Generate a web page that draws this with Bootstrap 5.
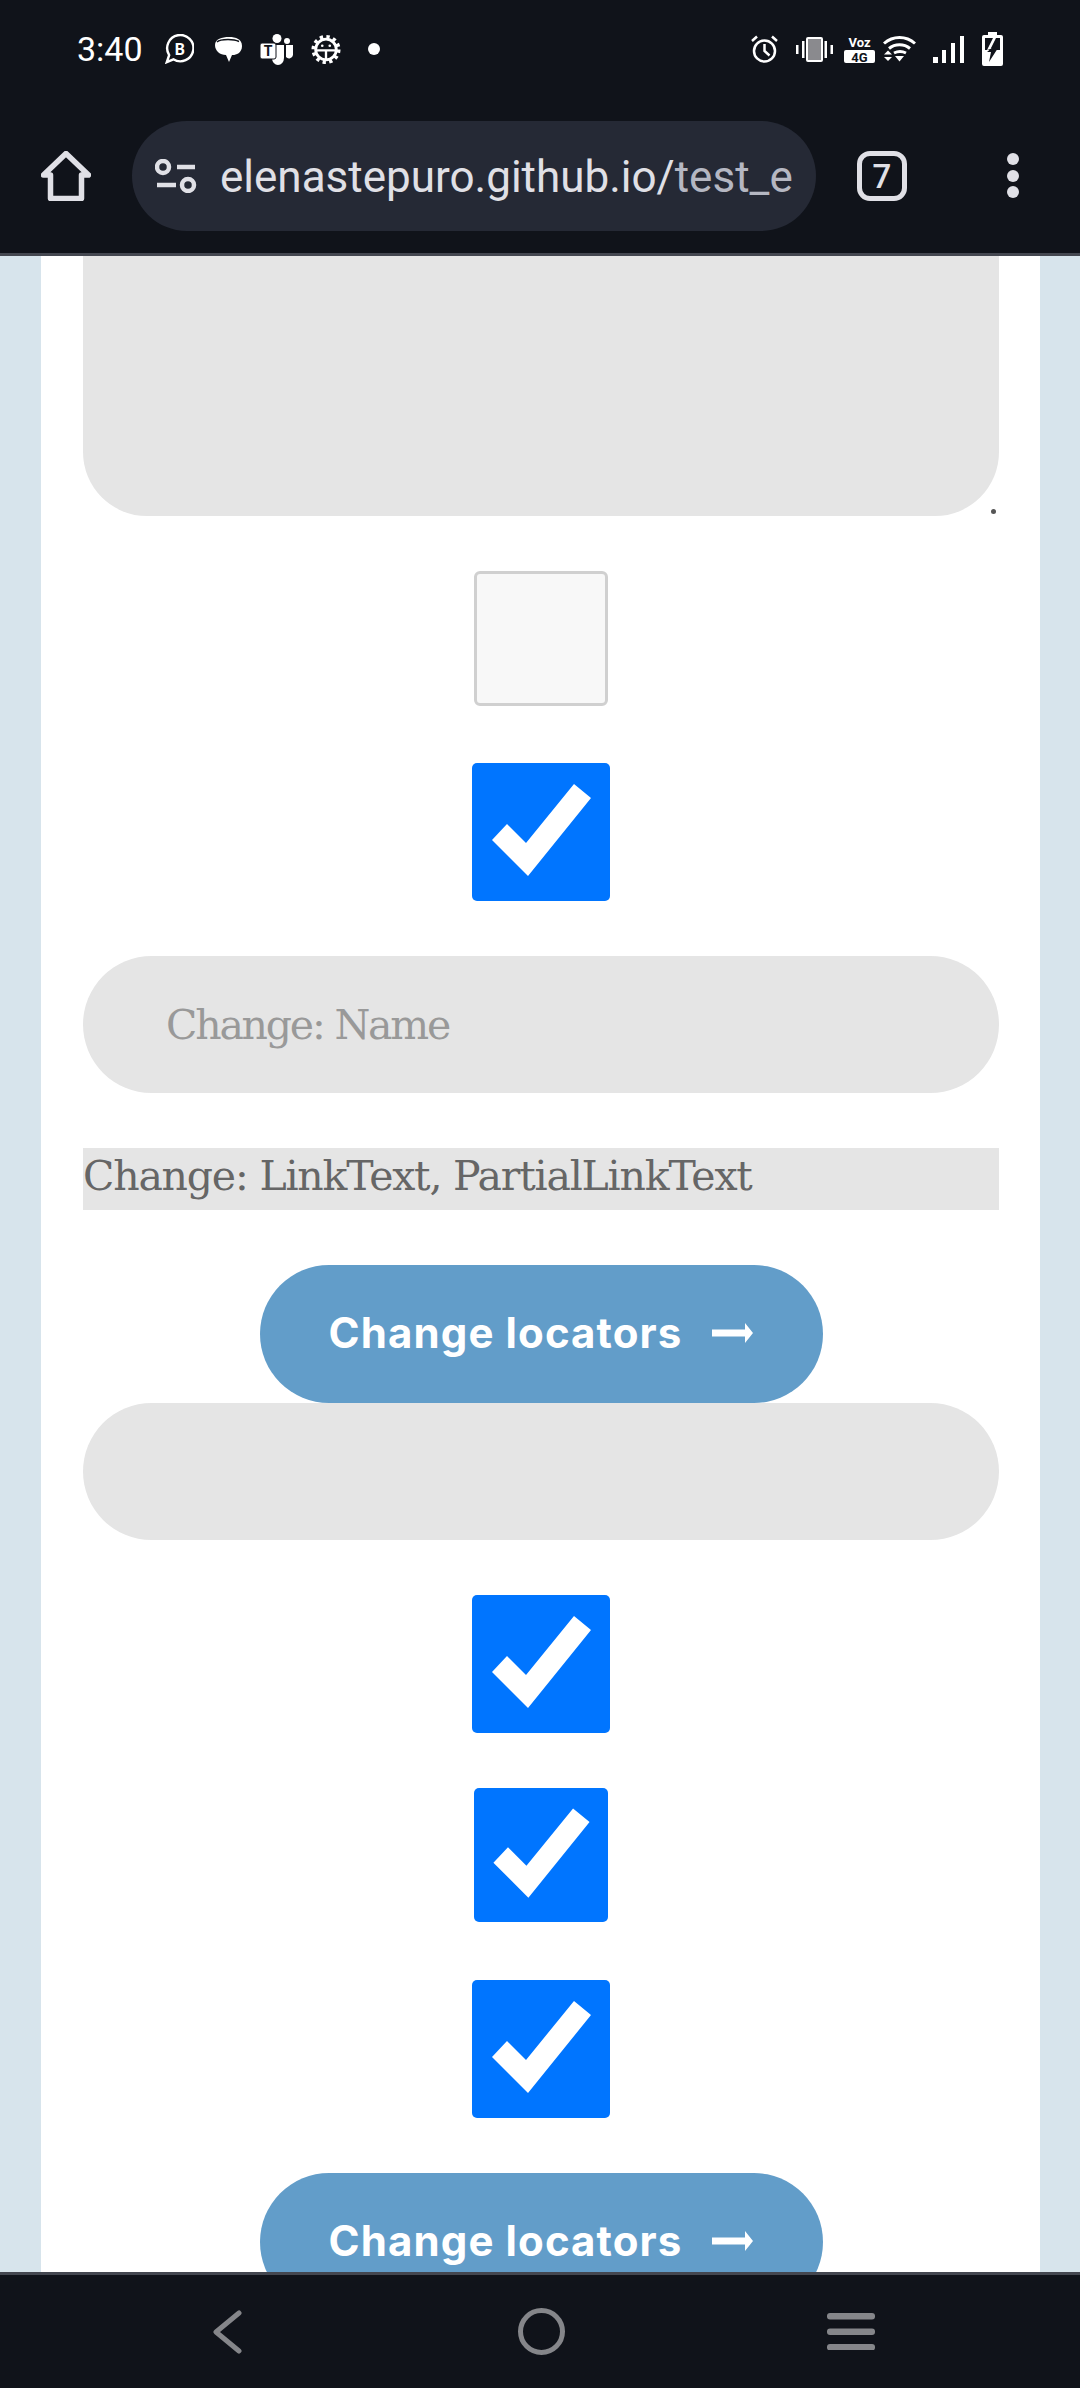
<!DOCTYPE html>
<html lang="en">
<head>
    <meta charset="UTF-8" />
    <meta name="viewport" content="width=device-width, initial-scale=1.0" />
    <title>Change locators</title>
    <link href="https://cdn.jsdelivr.net/npm/bootstrap@5.3.2/dist/css/bootstrap.min.css" rel="stylesheet" />
    <style>
        html, body { height: 2388px; overflow: hidden; }
        body { background: #d7e4ec; width: 1080px; font-family: Roboto, sans-serif; }
        .app-frame { height: 2388px; }
        .chrome-top { height: 256px; background: #10131a; border-bottom: 3px solid #444750; color: #fff; }
        .status-row { height: 98px; padding: 0 77px 0 77px; }
        .status-time { font-size: 34px; width: 87px; }
        .st-chat { margin-left: 21px; }
        .st-teams, .st-gear { margin-left: 18px; }
        .st-dot { margin-left: 27px; width: 12px; height: 12px; }
        .st-alarm { margin-right: 18px; }
        .st-vib { margin-right: 11px; }
        .st-voz { margin-right: 8px; }
        .st-wifi { margin-right: 17px; }
        .st-signal { margin-right: 18px; }
        .url-row { height: 155px; padding-top: 23px; }
        .home-btn { width: 132px; padding: 30px 0 0 41px; }
        .url-pill { width: 684px; height: 110px; background: #252935; border-radius: 55px; font-size: 44px; color: #e0e0e6; padding: 2px 0 0 88px; position: relative; overflow: hidden; white-space: nowrap; }
        .url-pill svg { position: absolute; left: 23px; top: 38px; }
        .url-dim { color: #b5b7c2; }
        .tab-count { width: 50px; height: 50px; border: 5px solid #e0e0e6; border-radius: 13px; color: #e0e0e6; font-size: 33px; font-weight: 500; margin: 30px 0 0 41px; line-height: 1; }
        .menu-dots { margin: 32px 0 0 100px; gap: 4.5px; }
        .menu-dots span { width: 12px; height: 12px; border-radius: 50%; background: #e0e0e6; display: block; }
        .page-area { height: 2016px; overflow: hidden; }
        .page-sheet { width: 999px; margin-left: 41px; height: 100%; background: #fff; padding: 0 41px 0 42px; font-family: "DejaVu Serif", serif; }
        .grey-block { height: 260px; background: #e5e5e5; border-radius: 0 0 64px 64px; }
        .dot-mark { height: 55px; position: relative; }
        .dot-mark::after { content: ""; position: absolute; right: 3px; top: -7px; width: 5px; height: 5px; border-radius: 50%; background: #555; }
        .check-off { width: 134px; height: 135px; background: #f8f8f8; border: 3px solid #d0d0d0; border-radius: 6px; }
        .check-on { width: 138px; height: 138px; background: #0075ff; border-radius: 5px; }
        .check-small { width: 134px; height: 134px; }
        .tick-svg { width: 100%; height: 100%; display: block; }
        .flow-gap { margin-top: 55px; }
        .flow-gap-2 { margin-top: 57px; }
        .flow-gap-3 { margin-top: 58px; }
        .grey-input { height: 137px; background: #e5e5e5; border: 0; border-radius: 69px; padding-left: 83px; font-size: 41px; color: #999; font-family: inherit; letter-spacing: -2.200px; width: 100%; display: block; }
        .grey-input::placeholder { color: #999; opacity: 1; }
        .grey-link { height: 62px; background: #e5e5e5; color: #666; font-size: 41px; line-height: 56px; letter-spacing: -1.200px; white-space: nowrap; text-decoration: none; display: block; }
        .locator-btn { width: 563px; height: 138px; background: #629dc9; color: #fff; border: 0; border-radius: 69px; font-family: Inter, sans-serif; font-weight: 700; font-size: 42px; letter-spacing: 1.100px; gap: 30px; padding: 0 0 3px 0; }
        .chrome-bottom { height: 116px; background: #10131a; border-top: 3px solid #444750; }
        .nav-back { margin-left: 212px; }
        .nav-home { margin-left: 276px; }
        .nav-menu { margin-left: 262px; }
    </style>
</head>
<body>
<div class="app-frame d-flex flex-column">
    <div class="chrome-top flex-shrink-0">
        <div class="status-row d-flex align-items-center">
            <span class="status-time">3:40</span>
            <svg width="30" height="30" viewBox="0 0 32 32" fill="none" stroke="#fff" stroke-width="2.600"><path d="M3 30l2.500-7.500a14 14 0 1 1 4.500 4.500z"/><text x="17" y="22" font-size="17" font-weight="700" text-anchor="middle" fill="#fff" stroke="none" font-family="Roboto">B</text></svg>
            <svg class="st-chat" width="27" height="25" viewBox="0 0 27 25" fill="#fff"><path d="M0 8C0 2 7 0 14 0s13 2 13 9-6 9-9 9h-1l-3 7-3-7C5 18 0 14 0 8z"/><path d="M2 5C4 3 9 2.500 13 2.500s8 .5 11 2" fill="none" stroke="#10131a" stroke-width="1.500"/></svg>
            <svg class="st-teams" width="33" height="31" viewBox="0 0 33 31" fill="#fff"><circle cx="17" cy="4.500" r="4.500"/><circle cx="27" cy="7" r="3"/><path d="M13 11h11v13a6 7 0 0 1-12 0zM26 11h7v10a4 4 0 0 1-7 2z"/><rect x="0" y="9" width="16" height="16" rx="2" stroke="#10131a"/><text x="8" y="22" font-size="14" font-weight="700" text-anchor="middle" fill="#10131a" font-family="Roboto">T</text></svg>
            <svg class="st-gear" width="30" height="31" viewBox="0 0 32 32" fill="none" stroke="#fff"><circle cx="16" cy="16" r="11" stroke-width="3"/><circle cx="16" cy="16" r="13.500" stroke-width="4" stroke-dasharray="3.500 3.570"/><path d="M5 17h22M16 17v10" stroke-width="2.500"/><circle cx="12" cy="12" r="1.400" fill="#fff" stroke="none"/><circle cx="20" cy="12" r="1.400" fill="#fff" stroke="none"/></svg>
            <span class="st-dot rounded-circle bg-white d-block"></span>
            <div class="ms-auto d-flex align-items-center">
                <svg class="st-alarm" width="27" height="28" viewBox="0 0 27 28" fill="none" stroke="#fff" stroke-width="2.500"><circle cx="13.500" cy="16" r="10.500"/><path d="M13.500 9v7l5 4.500M1 6l5-4.500M26 6l-5-4.500"/></svg>
                <svg class="st-vib" width="37" height="25" viewBox="0 0 37 25" fill="#fff"><rect x="11" y="1" width="15" height="23" rx="1" fill="#8a8a8e" stroke="#fff" stroke-width="2"/><rect x="0" y="8" width="2.500" height="9"/><rect x="6" y="4" width="2.500" height="17"/><rect x="28.500" y="4" width="2.500" height="17"/><rect x="34.500" y="8" width="2.500" height="9"/></svg>
                <svg class="st-voz" width="31" height="27" viewBox="0 0 31 27" fill="#fff"><text x="15.500" y="11" font-size="13" font-weight="700" text-anchor="middle" font-family="Roboto">Voz</text><rect x="0" y="14" width="31" height="13" rx="2"/><text x="15.500" y="25.500" font-size="13" font-weight="700" text-anchor="middle" fill="#10131a" font-family="Roboto">4G</text></svg>
                <svg class="st-wifi" width="33" height="26" viewBox="0 0 33 26" fill="none" stroke="#fff" stroke-width="3"><path d="M1 7.500c9-8 22-8 31 0M6 12.500c6-5 15-5 21 0M11 17c4-2 8-2 12 0"/><path d="M1 18.500l4-4 4 4zM1 21l4 4 4-4zM12 20h9l-4.500 5.500z" fill="#fff" stroke="none"/></svg>
                <svg class="st-signal" width="31" height="27" viewBox="0 0 31 27" fill="#fff"><rect x="0" y="21" width="5" height="6"/><rect x="9" y="14" width="4" height="13"/><rect x="18" y="7" width="4" height="20"/><rect x="27" y="0" width="4" height="27"/></svg>
                <svg width="21" height="34" viewBox="0 0 21 34" fill="#fff"><path d="M6 0h9v3h4a2 2 0 0 1 2 2v27a2 2 0 0 1-2 2H2a2 2 0 0 1-2-2V5a2 2 0 0 1 2-2h4z"/><rect x="3" y="6" width="15" height="12" fill="#10131a"/><path d="M11 6h3l-5 10h3L5 18z"/><path d="M12 14l-7 6h4l-2 10 9-14h-5z" fill="#10131a"/></svg>
            </div>
        </div>
        <div class="url-row d-flex align-items-start">
            <div class="home-btn">
                <svg width="50" height="50" viewBox="0 0 50 50" fill="none" stroke="#e0e0e6" stroke-width="5.500" stroke-linejoin="round" class="d-block"><path d="M2.500 24L25 2.500 47.500 24h-7v23.500h-31V24z"/></svg>
            </div>
            <div class="url-pill d-flex align-items-center">
                <svg width="42" height="34" viewBox="0 0 42 34" fill="none" stroke="#e0e0e6" stroke-width="4.500"><circle cx="8" cy="8" r="6"/><circle cx="33" cy="26" r="6"/><path d="M22 8h18M2 26h19"/></svg>
                <span>elenastepuro.github.io/<span class="url-dim">test_e</span></span>
            </div>
            <div class="tab-count d-flex align-items-center justify-content-center">7</div>
            <div class="menu-dots d-flex flex-column"><span></span><span></span><span></span></div>
        </div>
    </div>
    <div class="page-area flex-grow-1">
        <div class="page-sheet">
            <div class="grey-block"></div>
            <div class="dot-mark"></div>
            <div class="d-flex justify-content-center"><div class="check-off"></div></div>
            <div class="d-flex justify-content-center flow-gap-2">
                <div class="check-on"><svg class="tick-svg" viewBox="0 0 138 138"><path d="M20 77l15-16 19 19 48-59 17 14-63 78z" fill="#fff"/></svg></div>
            </div>
            <input class="grey-input flow-gap" placeholder="Change: Name" />
            <a class="grey-link flow-gap" href="#">Change: LinkText, PartialLinkText</a>
            <div class="d-flex justify-content-center flow-gap">
                <button class="locator-btn d-flex align-items-center justify-content-center">Change locators <svg width="41" height="20" viewBox="0 0 41 20" fill="#fff"><path d="M0 6.500h33V0l8 10-8 10v-6.500H0z"/></svg></button>
            </div>
            <input class="grey-input" />
            <div class="d-flex justify-content-center flow-gap">
                <div class="check-on"><svg class="tick-svg" viewBox="0 0 138 138"><path d="M20 77l15-16 19 19 48-59 17 14-63 78z" fill="#fff"/></svg></div>
            </div>
            <div class="d-flex justify-content-center flow-gap">
                <div class="check-on check-small"><svg class="tick-svg" viewBox="0 0 138 138"><path d="M20 77l15-16 19 19 48-59 17 14-63 78z" fill="#fff"/></svg></div>
            </div>
            <div class="d-flex justify-content-center flow-gap-3">
                <div class="check-on"><svg class="tick-svg" viewBox="0 0 138 138"><path d="M20 77l15-16 19 19 48-59 17 14-63 78z" fill="#fff"/></svg></div>
            </div>
            <div class="d-flex justify-content-center flow-gap">
                <button class="locator-btn d-flex align-items-center justify-content-center">Change locators <svg width="41" height="20" viewBox="0 0 41 20" fill="#fff"><path d="M0 6.500h33V0l8 10-8 10v-6.500H0z"/></svg></button>
            </div>
        </div>
    </div>
    <div class="chrome-bottom flex-shrink-0 d-flex align-items-center">
        <svg class="nav-back" width="30" height="44" viewBox="0 0 30 44" fill="none" stroke="#85868a" stroke-width="5" stroke-linecap="round" stroke-linejoin="round"><path d="M27 3L4 22l23 19"/></svg>
        <svg class="nav-home" width="47" height="47" viewBox="0 0 47 47" fill="none" stroke="#85868a" stroke-width="5"><circle cx="23.500" cy="23.500" r="21"/></svg>
        <svg class="nav-menu" width="48" height="37" viewBox="0 0 48 37" fill="#85868a"><rect y="0" width="48" height="6.500" rx="3"/><rect y="15.500" width="48" height="6.500" rx="3"/><rect y="31" width="48" height="6.500" rx="3"/></svg>
    </div>
</div>
<script src="https://cdn.jsdelivr.net/npm/bootstrap@5.3.2/dist/js/bootstrap.bundle.min.js"></script>
</body>
</html>
